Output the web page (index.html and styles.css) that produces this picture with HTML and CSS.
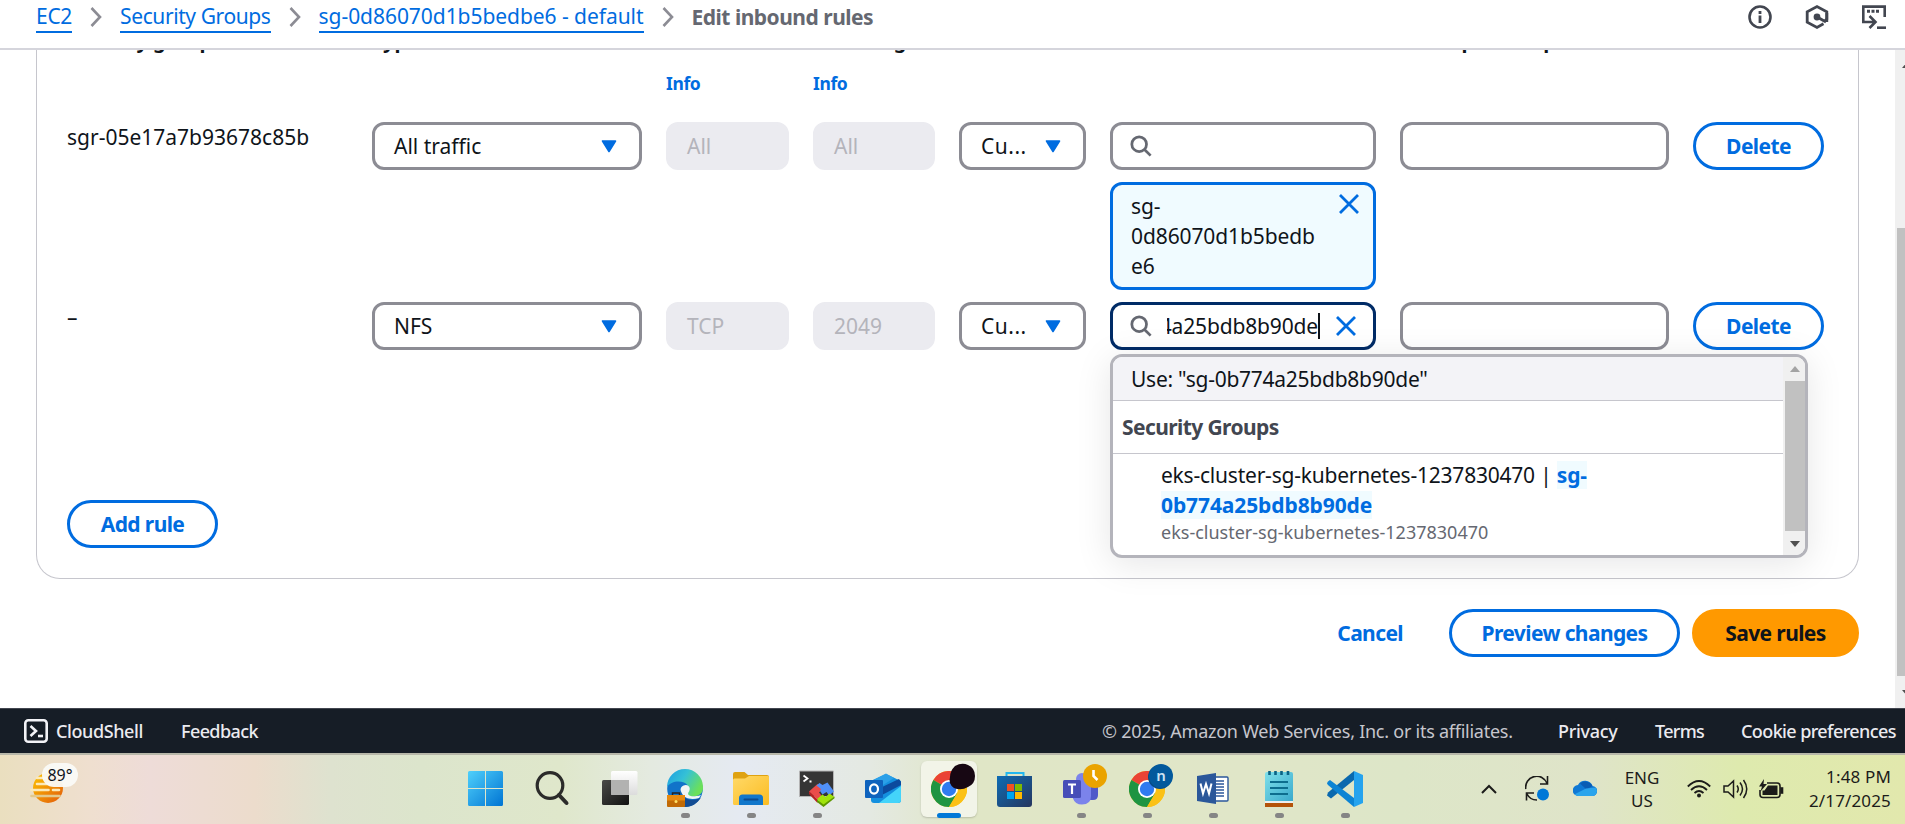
FILE: index.html
```html
<!DOCTYPE html>
<html lang="en">
<head>
<meta charset="utf-8">
<title>Edit inbound rules</title>
<link rel="stylesheet" href="styles.css">
</head>
<body>
<svg width="0" height="0" class="defs">
  <defs>
    <linearGradient id="win" x1="0" y1="0" x2="1" y2="1"><stop offset="0" stop-color="#4fd0fb"/><stop offset="1" stop-color="#0074d3"/></linearGradient>
    <linearGradient id="dark" x1="0" y1="0" x2="1" y2="1"><stop offset="0" stop-color="#4a4a48"/><stop offset="1" stop-color="#111"/></linearGradient>
    <linearGradient id="pane" x1="0" y1="0" x2="0" y2="1"><stop offset="0" stop-color="#fff"/><stop offset="1" stop-color="#dcdcdc"/></linearGradient>
    <linearGradient id="edge" x1="0" y1="0" x2="1" y2=".5"><stop offset="0" stop-color="#1b9de2"/><stop offset=".5" stop-color="#35c1d6"/><stop offset="1" stop-color="#6be05a"/></linearGradient>
    <linearGradient id="folder" x1="0" y1="0" x2="1" y2="1"><stop offset="0" stop-color="#ffd968"/><stop offset="1" stop-color="#fbbc22"/></linearGradient>
    <linearGradient id="store" x1="0" y1="0" x2="1" y2="1"><stop offset="0" stop-color="#0f6cb4"/><stop offset="1" stop-color="#26365e"/></linearGradient>
    <linearGradient id="sun" x1="0" y1="0" x2="1" y2="1"><stop offset="0" stop-color="#fdc400"/><stop offset="1" stop-color="#e25a0c"/></linearGradient>
    <linearGradient id="note" x1="0" y1="0" x2="1" y2="1"><stop offset="0" stop-color="#7fe0ea"/><stop offset="1" stop-color="#3aa9cc"/></linearGradient>
    <symbol id="caret" viewBox="0 0 16 13"><path d="M1.5 1h13L8 11.5z" fill="#006ce0" stroke="#006ce0" stroke-width="1.6" stroke-linejoin="round"/></symbol>
    <symbol id="mag" viewBox="0 0 24 24"><circle cx="10" cy="10" r="8" fill="none" stroke="#656871" stroke-width="3"/><path d="M15.5 15.5l7 7" stroke="#656871" stroke-width="3"/></symbol>
    <symbol id="close" viewBox="0 0 20 20"><path d="M1 1l18 18M19 1L1 19" stroke="#006ce0" stroke-width="2.8"/></symbol>
    <symbol id="chev" viewBox="0 0 12 20"><path d="M1.5 1l8.5 9-8.5 9" fill="none" stroke="#8c8c94" stroke-width="2.6"/></symbol>
    <symbol id="chrome" viewBox="0 0 36 36">
      <circle cx="18" cy="18" r="18" fill="#fbc116"/>
      <path d="M18 18L2.4 9A18 18 0 0 1 33.6 9z" fill="#ea4335"/>
      <path d="M2.4 9A18 18 0 0 0 18 36L26 22.500 18 18z" fill="#1e9442"/>
      <path d="M18 9h15.600a18 18 0 0 1-15.600 27l8-13.500z" fill="#fbc116"/>
      <circle cx="18" cy="18" r="9" fill="#fff"/><circle cx="18" cy="18" r="7.200" fill="#2f7bf0"/>
    </symbol>
  </defs>
</svg>

<div class="screen">
  <header class="topbar">
    <nav class="crumbs">
      <a class="crumb c1">EC2</a><svg class="chev"><use href="#chev"/></svg>
      <a class="crumb c2">Security Groups</a><svg class="chev"><use href="#chev"/></svg>
      <a class="crumb c3">sg-0d86070d1b5bedbe6 - default</a><svg class="chev"><use href="#chev"/></svg>
      <span class="current">Edit inbound rules</span>
    </nav>
    <div class="tools">
      <svg width="24" height="24" viewBox="0 0 24 24" fill="none" stroke="#424650" stroke-width="2.6"><circle cx="12" cy="12" r="10.500"/><path d="M12 10.500v7.500M12 6v3" stroke-width="2.800"/></svg>
      <svg width="24" height="24" viewBox="0 0 24 24" fill="none" stroke="#424650" stroke-width="2.800"><path d="M20 15.500l1.800-1.500V6.800L12 1.600 2.200 6.800v10.400L12 22.400l6.500-3.600"/><path d="M21.800 8v9"/><circle cx="12" cy="12" r="3.400" fill="#424650" stroke="none"/><path d="M13 12.500l8 4.500"/></svg>
      <svg width="24" height="24" viewBox="0 0 24 24" fill="none" stroke="#424650" stroke-width="2.600"><path d="M22.700 12V1.600H1.300V17H12M7.500 11l6 6-6 6"/><path d="M5 6.200h3M9.500 6.200h3M14 6.200h3" stroke-width="3"/><path d="M15 22.700h9"/></svg>
    </div>
  </header>

  <main class="main">
    <div class="content">
      <section class="panel">
        <div class="row head">
          <b>Security group rule ID</b><b>Type</b><b>Protocol</b><b>Port range</b><b>Source</b><b></b><b>Description - optional</b>
        </div>
        <div class="row infos"><span></span><span></span><a>Info</a><a>Info</a></div>
        <div class="row rule first">
          <span class="id">sgr-05e17a7b93678c85b</span>
          <div class="box"><span>All traffic</span><svg class="caret"><use href="#caret"/></svg></div>
          <div class="box off">All</div>
          <div class="box off">All</div>
          <div class="box small"><span>Cu...</span><svg class="caret"><use href="#caret"/></svg></div>
          <div class="stack">
            <div class="box find"><svg class="mag"><use href="#mag"/></svg></div>
            <div class="token"><span>sg-<br>0d86070d1b5bedb<br>e6</span><svg class="x"><use href="#close"/></svg></div>
          </div>
          <div class="box"></div>
          <button class="btn">Delete</button>
        </div>
        <div class="row rule second">
          <span class="id">–</span>
          <div class="box"><span>NFS</span><svg class="caret"><use href="#caret"/></svg></div>
          <div class="box off">TCP</div>
          <div class="box off">2049</div>
          <div class="box small"><span>Cu...</span><svg class="caret"><use href="#caret"/></svg></div>
          <div class="stack">
            <div class="box find focus"><svg class="mag"><use href="#mag"/></svg><div class="typed"><span>sg-0b774a25bdb8b90de</span></div><svg class="x"><use href="#close"/></svg></div>
            <div class="menu">
              <div class="list">
                <div class="use">Use: "sg-0b774a25bdb8b90de"</div>
                <div class="group">Security Groups</div>
                <div class="option">
                  <div class="name">eks-cluster-sg-kubernetes-1237830470 | <mark>sg-</mark><br><mark>0b774a25bdb8b90de</mark></div>
                  <div class="desc">eks-cluster-sg-kubernetes-1237830470</div>
                </div>
              </div>
              <div class="bar"><i class="up"></i><i class="thumb"></i><i class="down"></i></div>
            </div>
          </div>
          <div class="box"></div>
          <button class="btn">Delete</button>
        </div>
        <button class="btn add">Add rule</button>
      </section>
      <div class="actions"><span class="cancel">Cancel</span><button class="btn preview">Preview changes</button><button class="btn save">Save rules</button></div>
    </div>
    <div class="pagebar"><i class="up"></i><i class="thumb"></i><i class="down"></i></div>
  </main>

  <footer class="footer">
    <svg width="24" height="24" viewBox="0 0 24 24" fill="none" stroke="#f3f3f7" stroke-width="2.600"><rect x="1.300" y="1.300" width="21.400" height="21.400" rx="3"/><path d="M6.500 7l5.500 5-5.500 5"/><path d="M14 17h5"/></svg>
    <span class="f1">CloudShell</span><span class="f2">Feedback</span>
    <span class="f3">© 2025, Amazon Web Services, Inc. or its affiliates.</span><span class="f4">Privacy</span><span class="f5">Terms</span><span class="f6">Cookie preferences</span>
  </footer>

  <div class="taskbar">
    <div class="weather">
      <svg width="34" height="34" viewBox="0 0 34 34"><circle cx="18" cy="17" r="15" fill="url(#sun)"/><g stroke="#fbe9b8" stroke-width="2.600" stroke-linecap="round"><path d="M7 7h12M7 13h13M1.500 19h17M23 19h6"/></g><path d="M1.500 25h28" stroke="#e3c98c" stroke-width="2.600" stroke-linecap="round"/></svg>
      <span class="temp">89°</span>
    </div>
    <div class="apps">
      <div class="app"><svg viewBox="1 0 36 36"><path fill="url(#win)" d="M1.500 0H17v17H0V1.500Q0 0 1.500 0zM18 0H33.500q1.500 0 1.500 1.500V17h-17zM0 18h17v17H1.500Q0 35 0 33.500zM18 18h17V33.500q0 1.500-1.500 1.500H18z"/></svg></div>
      <div class="app"><svg viewBox="0 0 36 36" fill="none" stroke="#2b2b2a"><circle cx="15" cy="14.500" r="12.800" stroke-width="3.200"/><path d="M24 24l7.500 8" stroke-width="4" stroke-linecap="round"/></svg></div>
      <div class="app"><svg viewBox="0 0 36 36"><rect x="1" y="9" width="27" height="25" rx="1.500" fill="url(#dark)"/><rect x="10" y="0" width="26.500" height="24" rx="1.500" fill="url(#pane)"/><path d="M10 9h18v15H11.500Q10 24 10 22.500z" fill="#b2b2b1"/></svg></div>
      <div class="app run"><svg viewBox="0 0 36 36"><circle cx="18" cy="18" r="17.800" fill="#1173c9"/><path d="M0 16A18 18 0 0 1 36 16c.4 6-4 9.500-10 9.500-4 0-6-1.500-5-3.500 2-3 1.500-8-4-10.500C11 9 3 11 0 16z" fill="url(#edge)"/><path d="M14 17c-1.500 7 4 12 11 12 3.500 0 6.500-1 9-2.500C30 33 24 36.500 17 35.800z" fill="#124c93"/><path d="M13.500 19a5 5 0 0 1 8.500-3.500c1.500 2 .5 4.500-.8 6.500-.6 2.500 2.500 3.800 8.300 3 1.500 0 3-.5 4.500-1 l-2 3c-7 2-16 1.500-18.500-8z" fill="#f1f5f5"/><rect y="24" width="18" height="12" rx="1" fill="#c16a05"/><path d="M0 24h18v5.500H0z" fill="#e68a10"/><path d="M5.500 24v-2h7v2" fill="none" stroke="#222" stroke-width="1.500"/><circle cx="9" cy="30.500" r="1.500" fill="#ffe166"/></svg></div>
      <div class="app run"><svg viewBox="0 0 36 36"><path d="M0 3q0-2 2-2h9.500l3.500 3h19q2 0 2 2v9H0z" fill="#dfa211"/><path d="M0 9q0-1.500 1.500-1.500H12L16 5h19q1 0 1 1v26.500q0 1.500-1.500 1.500h-33Q0 34 0 32.500z" fill="url(#folder)"/><path d="M6 34v-7q0-3.500 3.500-3.500h17q3.500 0 3.500 3.500v7z" fill="#1277cb"/><path d="M11.500 28.500h13" stroke="#0a4b90" stroke-width="2" stroke-linecap="round"/></svg></div>
      <div class="app run"><svg viewBox="0 0 36 36"><path d="M.5 0h34v25.500H.5z" fill="#353535" stroke="#b4b4b4"/><path d="M4.500 4.500l4 3-4 3M10.500 10.500h2" fill="none" stroke="#fff" stroke-width="1.800"/><path d="M10 20.500l8.500-7.500 5 5-3.500 3.500 2.500 3-4 4z" fill="#ea4d4a"/><path d="M17.500 14.500l3-2.500 3 2 5-2.500 6.500 9-5 4-2.500-3.500-4 2.500-2.500-3.500 1-2z" fill="#5090f7"/><path d="M18 28l5.500-4.500 3 2.500 4-3.500 5 3.500-11 9.500z" fill="#a0e30b"/><path d="M10 20.500l8.500 8v3.500l-8.500-9z" fill="#b82222"/><path d="M18 28.500l6.500 5 11-8v1.800l-11 8.700-6.500-5z" fill="#5f9800"/></svg></div>
      <div class="app"><svg viewBox="0 0 36 36"><path d="M6 10L21 3l15 7v19q0 3-3 3H9q-3 0-3-3z" fill="#1490df"/><path d="M21 2.500l8 4.500-14 9-9-6z" fill="#2ba0e8"/><path d="M34 8l2 3v3L17 24l-2-7z" fill="#0c4a9e"/><path d="M36 15v14q0 3-3 3H14z" fill="#44d4fa"/><rect y="9" width="18" height="18" rx="1" fill="#0f63bd"/><ellipse cx="9" cy="18" rx="4" ry="4.700" fill="none" stroke="#fff" stroke-width="2.200"/></svg></div>
      <div class="app active"><svg viewBox="0 0 36 36"><use href="#chrome" width="36" height="36"/><path d="M24-5q7-4 13-1 7 3 7 11 0 8-7 11-7 4-14 1-6-4-4-11 0-6 5-11z" fill="#170713"/></svg></div>
      <div class="app"><svg viewBox="0 0 36 36"><path d="M9.500 6V2h17v4" fill="none" stroke="#22b8ef" stroke-width="2"/><path d="M0 5h35v28q0 3-3 3H3q-3 0-3-3z" fill="url(#store)"/><path d="M10 13h7v7h-7z" fill="#f25022"/><path d="M18 13h7v7h-7z" fill="#7fba00"/><path d="M10 21h7v7h-7z" fill="#00a4ef"/><path d="M18 21h7v7h-7z" fill="#ffb900"/></svg></div>
      <div class="app run"><svg viewBox="0 0 36 36"><circle cx="19" cy="8" r="6" fill="#7b83eb"/><path d="M26 13h9v11q0 5-5 5h-4z" fill="#5059c9"/><path d="M10 13h18v12q0 8.500-9 8.500-7 0-9-6z" fill="#7b83eb"/><rect y="9" width="18" height="18" rx="1.500" fill="#474eb8"/><path d="M5 13.500h8M9 13.500V23" stroke="#fff" stroke-width="2.200"/><circle cx="32" cy="5" r="12" fill="#eaa300"/><path d="M30.500-1v6l4 4" fill="none" stroke="#fff" stroke-width="2.600"/></svg></div>
      <div class="app run"><svg viewBox="0 0 36 36"><use href="#chrome" width="36" height="36"/><circle cx="31" cy="6" r="12" fill="#064b85"/><circle cx="32" cy="5" r="12" fill="#03599c"/></svg><span class="badge">n</span></div>
      <div class="app run"><svg viewBox="0 0 36 36"><rect x="17" y="6" width="16" height="24" rx="1" fill="#fff" stroke="#2b579a" stroke-width="1.400"/><path d="M19 10h10M19 13h10M19 16h10M19 19h10M19 22h10M19 25h10" stroke="#2b579a" stroke-width="1.500"/><path d="M2 5l19-3v31L2 30z" fill="#2b579a"/><path d="M5.500 12.500l2.500 10 3-9.500 3 9.500 2.500-10" fill="none" stroke="#fff" stroke-width="2"/></svg></div>
      <div class="app run"><svg viewBox="0 0 36 36"><path d="M4 32h28v4H4z" fill="#b45309"/><path d="M4 28h28v4H4z" fill="#eee"/><path d="M4 3q0-2 2-2h24q2 0 2 2v27H4z" fill="url(#note)"/><path d="M9 11h18M9 17h18M9 23h18" stroke="#0d6d8e" stroke-width="2"/><path d="M8.500 0v4M14.500 0v4M20.500 0v4M27 0v4" stroke="#0a6284" stroke-width="2.600"/></svg></div>
      <div class="app run"><svg viewBox="0 0 36 36"><path d="M27 0L36 4v28l-9 4z" fill="#25a3ee"/><path d="M27 0v9L4 27.500l-4-3 1-3z" fill="#0a69ae"/><path d="M0 12.500q0-2 3-3.500l24 18v9L1 14z" fill="#0c84d4"/></svg></div>
    </div>
    <div class="tray">
      <svg width="16" height="10" viewBox="0 0 16 10"><path d="M1 9l7-7 7 7" fill="none" stroke="#1c1c1a" stroke-width="2"/></svg>
      <svg class="sync" width="24" height="25" viewBox="0 0 24 25" fill="none" stroke="#1c1c1a" stroke-width="1.600"><path d="M.8 13A11 11 0 0 1 22 7.500M22.500 0v8H15M1.500 24.500V17H9M2 18a11 11 0 0 0 10 6"/><circle cx="18" cy="18.500" r="6" fill="#0078d7" stroke="none"/></svg>
      <svg class="cloud" width="24" height="17" viewBox="0 0 24 17"><path d="M5.500 16a5.500 5.500 0 0 1-.5-11A8 8 0 0 1 19.500 6 5 5 0 0 1 19 16z" fill="#0f78d4"/><path d="M7 3.500A8 8 0 0 1 19.500 6l-6 3.500z" fill="#0a5cb4"/><path d="M13 8.500l9.500-1A5 5 0 0 1 19 16H5.500Q3 16 1.700 14.300z" fill="#2aa4ec"/></svg>
      <div class="lang">ENG<br>US</div>
      <svg class="wifi" width="24" height="18" viewBox="0 0 24 18" fill="none" stroke="#1c1c1a" stroke-width="1.800"><path d="M.8 6.500q11.200-11 22.400 0M4 10q8-7.500 16 0M7.500 13q4.500-4 9 0"/><circle cx="12" cy="15.500" r="2" fill="#1c1c1a" stroke="none"/></svg>
      <svg class="vol" width="25" height="20" viewBox="0 0 25 20" fill="none" stroke="#1c1c1a" stroke-width="1.500"><path d="M1 7h4l5.500-5v16L5 13H1zM14 6.500q2.500 3.500 0 7M17 3.500q5 6.500 0 13M20.500 1q6.500 9 0 18"/></svg>
      <svg class="bat" width="25" height="20" viewBox="0 0 25 20" fill="none" stroke="#1c1c1a" stroke-width="1.600"><path d="M8 4h10q3 0 3 3v8.500q0 3-3 3H4q-3 0-3-3V11"/><path d="M22 9v5h1.500V9z" fill="#1c1c1a"/><path d="M9 6.500h9.500v9.500H3.500v-4.500h2z" fill="#1c1c1a" stroke="none"/><path d="M5 0L0 7.500h3L1.500 12.500 8 5H4.500z" fill="#1c1c1a" stroke="none"/></svg>
      <div class="clock">1:48 PM<br>2/17/2025</div>
    </div>
  </div>
</div>
</body>
</html>
```

FILE: styles.css
```css
* { box-sizing: border-box; }
body { margin: 0; background: #fff; color: #0f141a; font: 21px/30px "Noto Sans", "Open Sans", sans-serif; }
.defs { position: absolute; }
.screen { width: 1905px; height: 824px; display: flex; flex-direction: column; overflow: hidden; }
svg { display: block; flex: none; }

.topbar { height: 50px; flex: none; border-bottom: 2px solid #d5d5dc; display: flex; justify-content: space-between; padding: 0 19px 14px 36px; align-items: center; }
.crumbs { display: flex; align-items: center; gap: 18px; height: 34px; }
.crumb { color: #006ce0; white-space: nowrap; line-height: 28px; height: 31px; border-bottom: 2px solid #006ce0; }
.c1 { letter-spacing: -.3px; }
.c2 { letter-spacing: -.4px; }
.c3 { letter-spacing: -.05px; }
.chev { width: 12px; height: 20px; }
.current { color: #656871; font-weight: 700; white-space: nowrap; line-height: 28px; letter-spacing: -.5px; }
.tools { display: flex; gap: 33px; }

.main { flex: 1; min-height: 0; display: flex; }
.content { flex: 1; padding: 0 36px; overflow: hidden; }
.panel { height: 529px; width: 1823px; border: 1px solid #c6c6cd; border-top: 0; border-radius: 0 0 24px 24px; padding: 0 0 0 30px; }
.row { display: grid; grid-template-columns: 281px 270px 123px 122px 127px 266px 269px 131px; column-gap: 24px; }
.head { height: 3px; overflow: hidden; align-items: start; white-space: nowrap; font-size: 20px; line-height: 27px; letter-spacing: -.05px; }
.head b { margin-top: -23px; }
.infos { height: 69px; padding-top: 16px; color: #006ce0; font-size: 17.5px; font-weight: 700; letter-spacing: -.4px; line-height: 29px; }
.first { height: 180px; }
.second { height: 198px; }
.box { height: 48px; border: 3px solid #8c8c94; border-radius: 12px; display: flex; align-items: center; justify-content: space-between; padding: 0 22px 0 19px; white-space: nowrap; }
.box.off { background: #ebebf0; border-color: #ebebf0; color: #b4b4bb; padding-left: 18px; }
.small span { letter-spacing: .5px; }
.caret { width: 16px; height: 13px; }
.box.find { padding: 0 17px; }
.box.focus { border-color: #002b66; justify-content: flex-start; }
.mag { width: 22px; height: 22px; }
.typed { width: 154px; margin-left: 15px; overflow: hidden; display: flex; justify-content: flex-end; border-right: 2px solid #0f141a; line-height: 26px; letter-spacing: -.15px; }
.x { width: 20px; height: 20px; }
.focus .x { margin-left: 16px; }
.stack { position: relative; }
.token { margin-top: 12px; height: 108px; border: 3px solid #006ce0; border-radius: 12px; background: #f0fbff; display: flex; justify-content: space-between; padding: 6px 14px 0 18px; letter-spacing: -.1px; }
.token .x { margin-top: 3px; }
.menu { position: absolute; top: 52px; left: 0; width: 698px; height: 204px; border: 3px solid #b4b4bb; border-radius: 12px; overflow: hidden; background: #fff; display: flex; box-shadow: 0 6px 36px rgba(0,7,22,.1); z-index: 2; }
.list { flex: 1; }
.use { height: 44px; background: #f3f3f7; border-bottom: 1px solid #c6c6cd; padding: 7px 18px; letter-spacing: -.26px; }
.group { height: 53px; border-bottom: 1px solid #c6c6cd; padding: 11px 9px; font-weight: 700; color: #424650; letter-spacing: -.6px; }
.option { padding: 6px 48px; }
.name { letter-spacing: -.22px; }
mark { background: #f0fbff; color: #006ce0; font-weight: 700; letter-spacing: -.1px; }
.desc { font-size: 18px; line-height: 24px; color: #656871; }
.bar { width: 22px; background: #f0f0f0; display: flex; flex-direction: column; align-items: center; padding: 9px 0 8px 2px; }
.up { border: 5px solid transparent; border-top: 0; border-bottom: 6px solid #a3a3a3; }
.down { border: 5px solid transparent; border-bottom: 0; border-top: 6px solid #505050; }
.bar .thumb { width: 20px; height: 150px; background: #c1c1c1; margin: 9px 0 10px; }

.btn { font: inherit; font-weight: 700; letter-spacing: -.6px; color: #006ce0; background: #fff; border: 3px solid #006ce0; border-radius: 24px; height: 48px; padding: 0; white-space: nowrap; }
.add { width: 151px; display: block; }
.actions { display: flex; justify-content: flex-end; width: 1823px; padding-top: 30px; align-items: center; }
.cancel { color: #006ce0; font-weight: 700; letter-spacing: -.6px; margin-right: 46px; }
.preview { width: 231px; margin-right: 12px; }
.save { width: 167px; background: #f90; border-color: #f90; color: #0f141a; }
.pagebar { width: 10px; background: #f0f0f0; overflow: hidden; padding: 12px 0 0 2px; display: flex; flex-direction: column; }
.pagebar .up { margin-left: 5px; border-bottom-color: #505050; width: 10px; flex: none; }
.pagebar .thumb { background: #c1c1c1; width: 8px; height: 448px; margin-top: 160px; flex: none; }
.pagebar .down { margin: 14px 0 0 5px; width: 10px; flex: none; }

.footer { height: 45px; flex: none; background: #161d26; border-top: 1px solid #424650; display: flex; align-items: center; padding-left: 24px; color: #ebebf0; font-size: 18px; line-height: 24px; font-weight: 500; white-space: nowrap; }
.f1 { margin-left: 8px; width: 125px; letter-spacing: -.4px; }
.f2 { width: 921px; letter-spacing: -.6px; }
.f3 { width: 456px; color: #c6c6cd; font-weight: 400; letter-spacing: -.25px; }
.f4 { width: 97px; letter-spacing: -.3px; }
.f5 { width: 86px; letter-spacing: -.7px; }
.f6 { letter-spacing: -.6px; }

.taskbar { height: 71px; flex: none; border-top: 2px solid #b7b7a9; display: flex; background: linear-gradient(90deg, #eadfbf 0, #efdfcf 90px, #eedcd8 150px, #ecdccc 255px, #dee2cf 330px, #dce5cc 420px, #dfe7cb 560px, #e4eae0 650px, #e5eaf2 740px, #e4e9e2 870px, #e0e6c6 970px, #e0e6c8 1250px, #dde6c8 1400px, #dfe4c9 1590px, #deeaae 1740px, #e2e8ad 1905px); }
.weather { position: relative; width: 459px; padding: 16px 0 0 30px; }
.temp { position: absolute; left: 42px; top: 8px; width: 36px; height: 24px; border-radius: 12px; background: rgba(250,250,247,.95); font-size: 16px; line-height: 24px; text-align: center; }
.apps { display: flex; gap: 10px; padding-top: 6px; width: 1022px; }
.app { position: relative; width: 56px; height: 56px; padding: 10px 10px 0; border-radius: 6px; display: flex; flex-direction: column; align-items: center; flex: none; }
.app svg { width: 36px; height: 36px; overflow: visible; }
.run::after { content: ""; width: 9px; height: 5px; border-radius: 3px; background: #858585; margin-top: 6px; flex: none; }
.active { background: #f2f4e8; box-shadow: 0 1px 2px rgba(0,0,0,.18); }
.active::after { content: ""; width: 24px; height: 5px; border-radius: 3px; background: #0078d7; margin-top: 6px; flex: none; }
.badge { position: absolute; left: 30px; top: 3px; width: 24px; text-align: center; color: #cfe3f3; font: 600 15px/22px "Noto Sans", sans-serif; }
.tray { display: flex; align-items: center; color: #1c1c1a; font: 17px/24px "Noto Sans", sans-serif; flex: 1; padding: 0 14px 2px 0; }
.sync { margin-left: 28px; }
.cloud { margin-left: 24px; }
.lang { margin-left: 22px; width: 46px; text-align: center; line-height: 23px; }
.wifi { margin-left: 22px; }
.vol { margin-left: 12px; }
.bat { margin-left: 11px; }
.clock { margin-left: auto; text-align: right; letter-spacing: .15px; }
```
